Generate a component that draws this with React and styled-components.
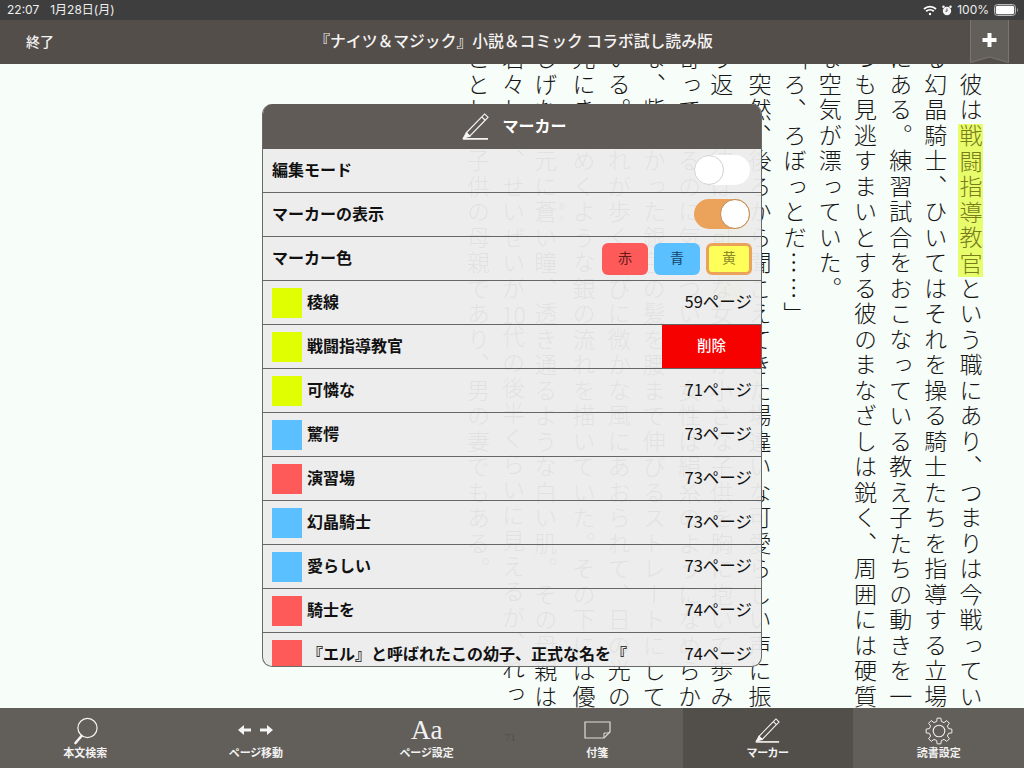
import React from "react";
import styled, { createGlobalStyle } from "styled-components";

const UI = `"Noto Sans CJK JP", "Noto Sans", sans-serif`;

const Global = createGlobalStyle`
  html, body { margin: 0; padding: 0; background: #f7fdf9; }
  body { font-family: ${UI}; }
`;

const Screen = styled.div`
  width: 1024px;
  height: 768px;
  display: flex;
  flex-direction: column;
  overflow: hidden;
`;

const StatusBar = styled.div`
  height: 20px;
  flex: none;
  background: #3e3e3e;
  color: #eee;
  font: 400 12px/20px Inter, ${UI};
  display: flex;
  align-items: center;
  padding: 0 6px 0 7px;
`;
const StatusGap = styled.span`
  margin-left: 11px;
`;
const StatusRight = styled.div`
  margin-left: auto;
  display: flex;
  align-items: center;
  gap: 5px;
`;

const NavBar = styled.div`
  height: 44px;
  flex: none;
  background: #544e4a;
  color: #f4f4f4;
  display: grid;
  grid-template-columns: 1fr auto 1fr;
  align-items: center;
`;
const NavDone = styled.div`
  font-size: 14px;
  font-weight: 500;
  padding-left: 26px;
  margin-top: -3px;
`;
const NavTitle = styled.div`
  font-size: 15.8px;
  font-weight: 500;
  white-space: nowrap;
  margin: -3px 0 0 3px;
`;
const Bookmark = styled.svg`
  justify-self: end;
  align-self: start;
  margin-right: 15px;
  display: block;
`;

const Reader = styled.div`
  flex: 1;
  min-height: 0;
  position: relative;
  overflow: hidden;
  background: #f7fdf9;
`;
const Page = styled.div`
  display: flex;
  flex-direction: row-reverse;
  margin-top: -17px;
  padding-right: 36px;
  font-family: ${UI};
  font-weight: 300;
  font-size: 23px;
  letter-spacing: 2.5px;
  color: #161616;
`;
const Column = styled.div`
  writing-mode: vertical-rl;
  flex: none;
  width: 35.2px;
  height: 680px;
  line-height: 35.2px;
  white-space: nowrap;
`;
const Marked = styled.span`
  display: inline-block;
  width: 25px;
  line-height: 25px;
  background: ${(p) => p.$bg};
  color: ${(p) => p.$fg};
`;
const Tcy = styled.span`
  text-combine-upright: all;
`;
const Ruby = styled.ruby`
  rt {
    font-size: 8px;
    letter-spacing: 0;
    line-height: 8px;
  }
`;

const Panel = styled.div`
  position: absolute;
  left: 262px;
  top: 40px;
  width: 498px;
  height: 562px;
  border: 1px solid #6a6a6a;
  border-top: none;
  border-radius: 10px;
  overflow: hidden;
  background: rgba(236, 236, 236, 0.95);
`;
const PanelHead = styled.div`
  height: 45px;
  background: #615b57;
  color: #fff;
  display: flex;
  align-items: center;
  justify-content: center;
  gap: 13px;
  font-size: 16px;
  font-weight: 700;
  padding-left: 5px;
`;
const HeadText = styled.span`
  margin-bottom: 4px;
`;
const Row = styled.div`
  height: 44px;
  box-sizing: border-box;
  border-bottom: 1px solid #666;
  display: flex;
  align-items: center;
  padding: 0 9px 0 9px;
  color: #111;
`;
const Label = styled.div`
  font-size: 16px;
  font-weight: 700;
  white-space: nowrap;
  margin-bottom: 4px;
`;
const Swatch = styled.div`
  width: 30px;
  height: 30px;
  flex: none;
  margin-right: 5px;
  background: ${(p) => p.$c};
`;
const PageNum = styled.div`
  margin-left: auto;
  margin-bottom: 4px;
  font-size: 16.5px;
  font-weight: 400;
  white-space: nowrap;
`;
const Delete = styled.div`
  margin-left: auto;
  margin-right: -9px;
  align-self: stretch;
  width: 99px;
  padding-bottom: 4px;
  box-sizing: border-box;
  background: #f70000;
  color: #fff;
  font-size: 14.5px;
  font-weight: 500;
  display: flex;
  align-items: center;
  justify-content: center;
`;
const Toggle = styled.div`
  margin-left: auto;
  margin-right: 2px;
  margin-bottom: 1px;
  width: 56px;
  height: 30px;
  border-radius: 15px;
  background: ${(p) => (p.$on ? "#eba25a" : "#fff")};
  display: flex;
  justify-content: ${(p) => (p.$on ? "flex-end" : "flex-start")};
`;
const Knob = styled.div`
  width: 28px;
  height: 28px;
  border-radius: 50%;
  background: #fff;
  border: 1px solid ${(p) => (p.$on ? "#c08a50" : "#d0d0d0")};
`;
const Swatches = styled.div`
  margin-left: auto;
  display: flex;
  gap: 6px;
`;
const ColorBtn = styled.div`
  width: 46px;
  height: 32px;
  box-sizing: border-box;
  border-radius: 6px;
  padding-bottom: 3px;
  background: ${(p) => p.$bg};
  color: ${(p) => p.$fg};
  border: ${(p) => (p.$sel ? "3px solid #eba25a" : "none")};
  font-size: 14px;
  display: flex;
  align-items: center;
  justify-content: center;
`;

const Toolbar = styled.div`
  height: 60px;
  flex: none;
  position: relative;
  background: #625e59;
  display: grid;
  grid-template-columns: repeat(6, 1fr);
`;
const PageNo = styled.div`
  position: absolute;
  left: 505px;
  top: 23px;
  font: 400 11px/12px "Liberation Serif", serif;
  color: #544f4a;
`;
const Tab = styled.div`
  background: ${(p) => (p.$active ? "#524e49" : "transparent")};
  display: flex;
  flex-direction: column;
  align-items: center;
`;
const TabIcon = styled.div`
  height: 36px;
  margin-top: 1px;
  padding-bottom: ${(p) => p.$lift || 0}px;
  box-sizing: border-box;
  display: flex;
  align-items: flex-end;
  justify-content: center;
`;
const AaGlyph = styled.div`
  font: 400 27px/30px "Liberation Serif", serif;
  color: #f2f2f2;
`;
const TabLabel = styled.div`
  font-size: 11px;
  line-height: 14px;
  font-weight: 700;
  color: #f2f2f2;
  white-space: nowrap;
  font-feature-settings: "palt";
`;

const gearPath = (() => {
  const cx = 14, cy = 14, R = 13, r = 9.8, n = 8;
  const pts = [];
  for (let i = 0; i < n; i++) {
    const a = (i * 2 * Math.PI) / n - Math.PI / 2;
    const s = (2 * Math.PI) / n;
    [[r, -0.5], [R, -0.3], [R, 0.3], [r, 0.5]].forEach(([rad, k]) => {
      const t = a + k * s * 0.62;
      pts.push(`${(cx + rad * Math.cos(t)).toFixed(2)} ${(cy + rad * Math.sin(t)).toFixed(2)}`);
    });
  }
  return "M" + pts.join("L") + "Z";
})();

const Pencil = ({ size = 28 }) => (
  <svg width={size} height={size} viewBox="0 0 28 28" fill="none" stroke="#f4f4f4" strokeWidth="1.2">
    <path d="M4.5 20.5 L20.5 4 L23.5 1 L27 4.5 L24 7.5 L8 24 Z" />
    <path d="M20.5 4 L24 7.5" />
    <path d="M4.5 20.5 L1.5 26 L8 24 Z" fill="#f4f4f4" />
    <path d="M1 26.8 H27" strokeWidth="1.8" />
  </svg>
);
const SearchIcon = () => (
  <svg width="28" height="28" viewBox="0 0 28 28" fill="none" stroke="#f4f4f4">
    <circle cx="16.5" cy="11" r="9.6" strokeWidth="1.2" />
    <path d="M10.5 19 L4.5 26" strokeWidth="2.6" strokeLinecap="round" />
  </svg>
);
const ArrowsIcon = () => (
  <svg width="36" height="12" viewBox="0 0 36 12" fill="#f4f4f4">
    <path d="M0 6 L6 1 V4.6 H13 V7.4 H6 V11 Z" />
    <path d="M35 6 L29 1 V4.6 H22 V7.4 H29 V11 Z" />
  </svg>
);
const NoteIcon = () => (
  <svg width="27" height="18" viewBox="0 0 27 18" fill="none" stroke="#dcdcdc" strokeWidth="1.2">
    <path d="M1 1 H26 V11 L20 17 H1 Z" />
    <path d="M26 11 C24 12.5 21 12 20 12 V17" strokeWidth="1" />
  </svg>
);
const GearIcon = () => (
  <svg width="28" height="28" viewBox="0 0 28 28" fill="none" stroke="#f0f0f0" strokeWidth="1">
    <path d={gearPath} strokeLinejoin="round" />
    <circle cx="14" cy="14" r="5.8" strokeWidth="1.1" />
  </svg>
);

const lines = [
  ["　彼は", <Marked key="m" $bg="#e8fd6c" $fg="#7a7c1c">戦闘指導教官</Marked>, "という職にあり、つまりは今戦ってい"],
  ["る幻晶騎士、ひいてはそれを操る騎士たちを指導する立場"],
  ["にある。練習試合をおこなっている教え子たちの動きを一"],
  ["つも見逃すまいとする彼のまなざしは鋭く、周囲には硬質"],
  ["な空気が漂っていた。"],
  ["「ろ、ろぼっとだ……」"],
  ["　突然、後ろから聞こえてきた場違いな可愛らしい声に振"],
  ["り返った彼は、", <Marked key="m" $bg="#eef7a0" $fg="#161616">可<Ruby>憐<rt>か</rt></Ruby>な</Marked>, "女性が小さな子供を胸に抱いて歩み"],
  ["寄ってくるのに気がついた。女性は絹糸のようになめらか"],
  ["な、紫がかった銀色の髪を腰まで伸びるストレートにして"],
  ["いる。それが歩くたびに微かな風にあおられて、日の光の"],
  ["光にきらめくような銀の流れを描いていた。その下には優"],
  ["しげな目元に", <Ruby key="r">蒼<rt>あお</rt></Ruby>, "い瞳、透き通るような白い肌。その母親は"],
  ["若々しく、せいぜいが", <Tcy key="t">10</Tcy>, "代の後半くらいに見えるが、れっ"],
  ["ことして子供の母親であり、男の妻でもある。"],
];

const Y = "#e0ff00", B = "#5ac0ff", R = "#ff5a5a";
const markers = [
  { c: Y, t: "稜線", p: "59ページ" },
  { c: Y, t: "戦闘指導教官", del: true },
  { c: Y, t: "可憐な", p: "71ページ" },
  { c: B, t: "驚愕", p: "73ページ" },
  { c: R, t: "演習場", p: "73ページ" },
  { c: B, t: "幻晶騎士", p: "73ページ" },
  { c: B, t: "愛らしい", p: "73ページ" },
  { c: R, t: "騎士を", p: "74ページ" },
  { c: R, t: "『エル』と呼ばれたこの幼子、正式な名を『", p: "74ページ" },
];

export default function App() {
  return (
    <Screen>
      <Global />
      <StatusBar>
        <span>22:07</span>
        <StatusGap>1月28日(月)</StatusGap>
        <StatusRight>
          <svg width="14" height="11" viewBox="0 0 14 11" fill="none" stroke="#fff" strokeWidth="1.8">
            <path d="M1 4 C4.5 0.8 9.5 0.8 13 4" />
            <path d="M3.2 6.2 C5.4 4.3 8.6 4.3 10.8 6.2" />
            <circle cx="7" cy="9" r="1.2" fill="#fff" stroke="none" />
          </svg>
          <svg width="10" height="11" viewBox="0 0 10 11" fill="#f4f4f4">
            <circle cx="5" cy="6" r="4.2" />
            <circle cx="1.5" cy="1.8" r="1.3" />
            <circle cx="8.5" cy="1.8" r="1.3" />
            <path d="M5 3.5 V6.2 H3.4" stroke="#3e3e3e" strokeWidth="0.9" fill="none" />
          </svg>
          <span>100%</span>
          <svg width="24" height="12" viewBox="0 0 24 12">
            <rect x="0.5" y="0.5" width="21" height="11" rx="3" fill="none" stroke="#bbb" />
            <rect x="1.8" y="1.8" width="18.4" height="8.4" rx="1.8" fill="#fff" />
            <path d="M23 4 C24 4.6 24 7.4 23 8 Z" fill="#bbb" />
          </svg>
        </StatusRight>
      </StatusBar>

      <NavBar>
        <NavDone>終了</NavDone>
        <NavTitle>『ナイツ＆マジック』小説＆コミック コラボ試し読み版</NavTitle>
        <Bookmark width="39" height="43" viewBox="0 0 39 43">
          <path d="M0.5 0 V42.5 L19.5 37 L38.5 42.5 V0" fill="#625e5a" stroke="#7a7570" />
          <path d="M17.5 13 H21.5 V18 H26.5 V22 H21.5 V27 H17.5 V22 H12.5 V18 H17.5 Z" fill="#fff" />
        </Bookmark>
      </NavBar>

      <Reader>
        <Page>
          {lines.map((l, i) => (
            <Column key={i}>{l}</Column>
          ))}
        </Page>
        <Panel>
          <PanelHead>
            <Pencil size={27} />
            <HeadText>マーカー</HeadText>
          </PanelHead>
          <Row>
            <Label>編集モード</Label>
            <Toggle><Knob /></Toggle>
          </Row>
          <Row>
            <Label>マーカーの表示</Label>
            <Toggle $on><Knob $on /></Toggle>
          </Row>
          <Row>
            <Label>マーカー色</Label>
            <Swatches>
              <ColorBtn $bg={R} $fg="#641818">赤</ColorBtn>
              <ColorBtn $bg={B} $fg="#14466e">青</ColorBtn>
              <ColorBtn $bg="#ffff59" $fg="#8c8c28" $sel>黄</ColorBtn>
            </Swatches>
          </Row>
          {markers.map((m, i) => (
            <Row key={i}>
              <Swatch $c={m.c} />
              <Label>{m.t}</Label>
              {m.del ? <Delete>削除</Delete> : <PageNum>{m.p}</PageNum>}
            </Row>
          ))}
        </Panel>
      </Reader>

      <Toolbar>
        <Tab>
          <TabIcon><SearchIcon /></TabIcon>
          <TabLabel>本文検索</TabLabel>
        </Tab>
        <Tab>
          <TabIcon $lift={9}><ArrowsIcon /></TabIcon>
          <TabLabel>ページ移動</TabLabel>
        </Tab>
        <Tab>
          <TabIcon><AaGlyph>Aa</AaGlyph></TabIcon>
          <TabLabel>ページ設定</TabLabel>
        </Tab>
        <Tab>
          <TabIcon $lift={6}><NoteIcon /></TabIcon>
          <TabLabel>付箋</TabLabel>
        </Tab>
        <Tab $active>
          <TabIcon $lift={2}><Pencil size={25} /></TabIcon>
          <TabLabel>マーカー</TabLabel>
        </Tab>
        <Tab>
          <TabIcon><GearIcon /></TabIcon>
          <TabLabel>読書設定</TabLabel>
        </Tab>
        <PageNo>71</PageNo>
      </Toolbar>
    </Screen>
  );
}
